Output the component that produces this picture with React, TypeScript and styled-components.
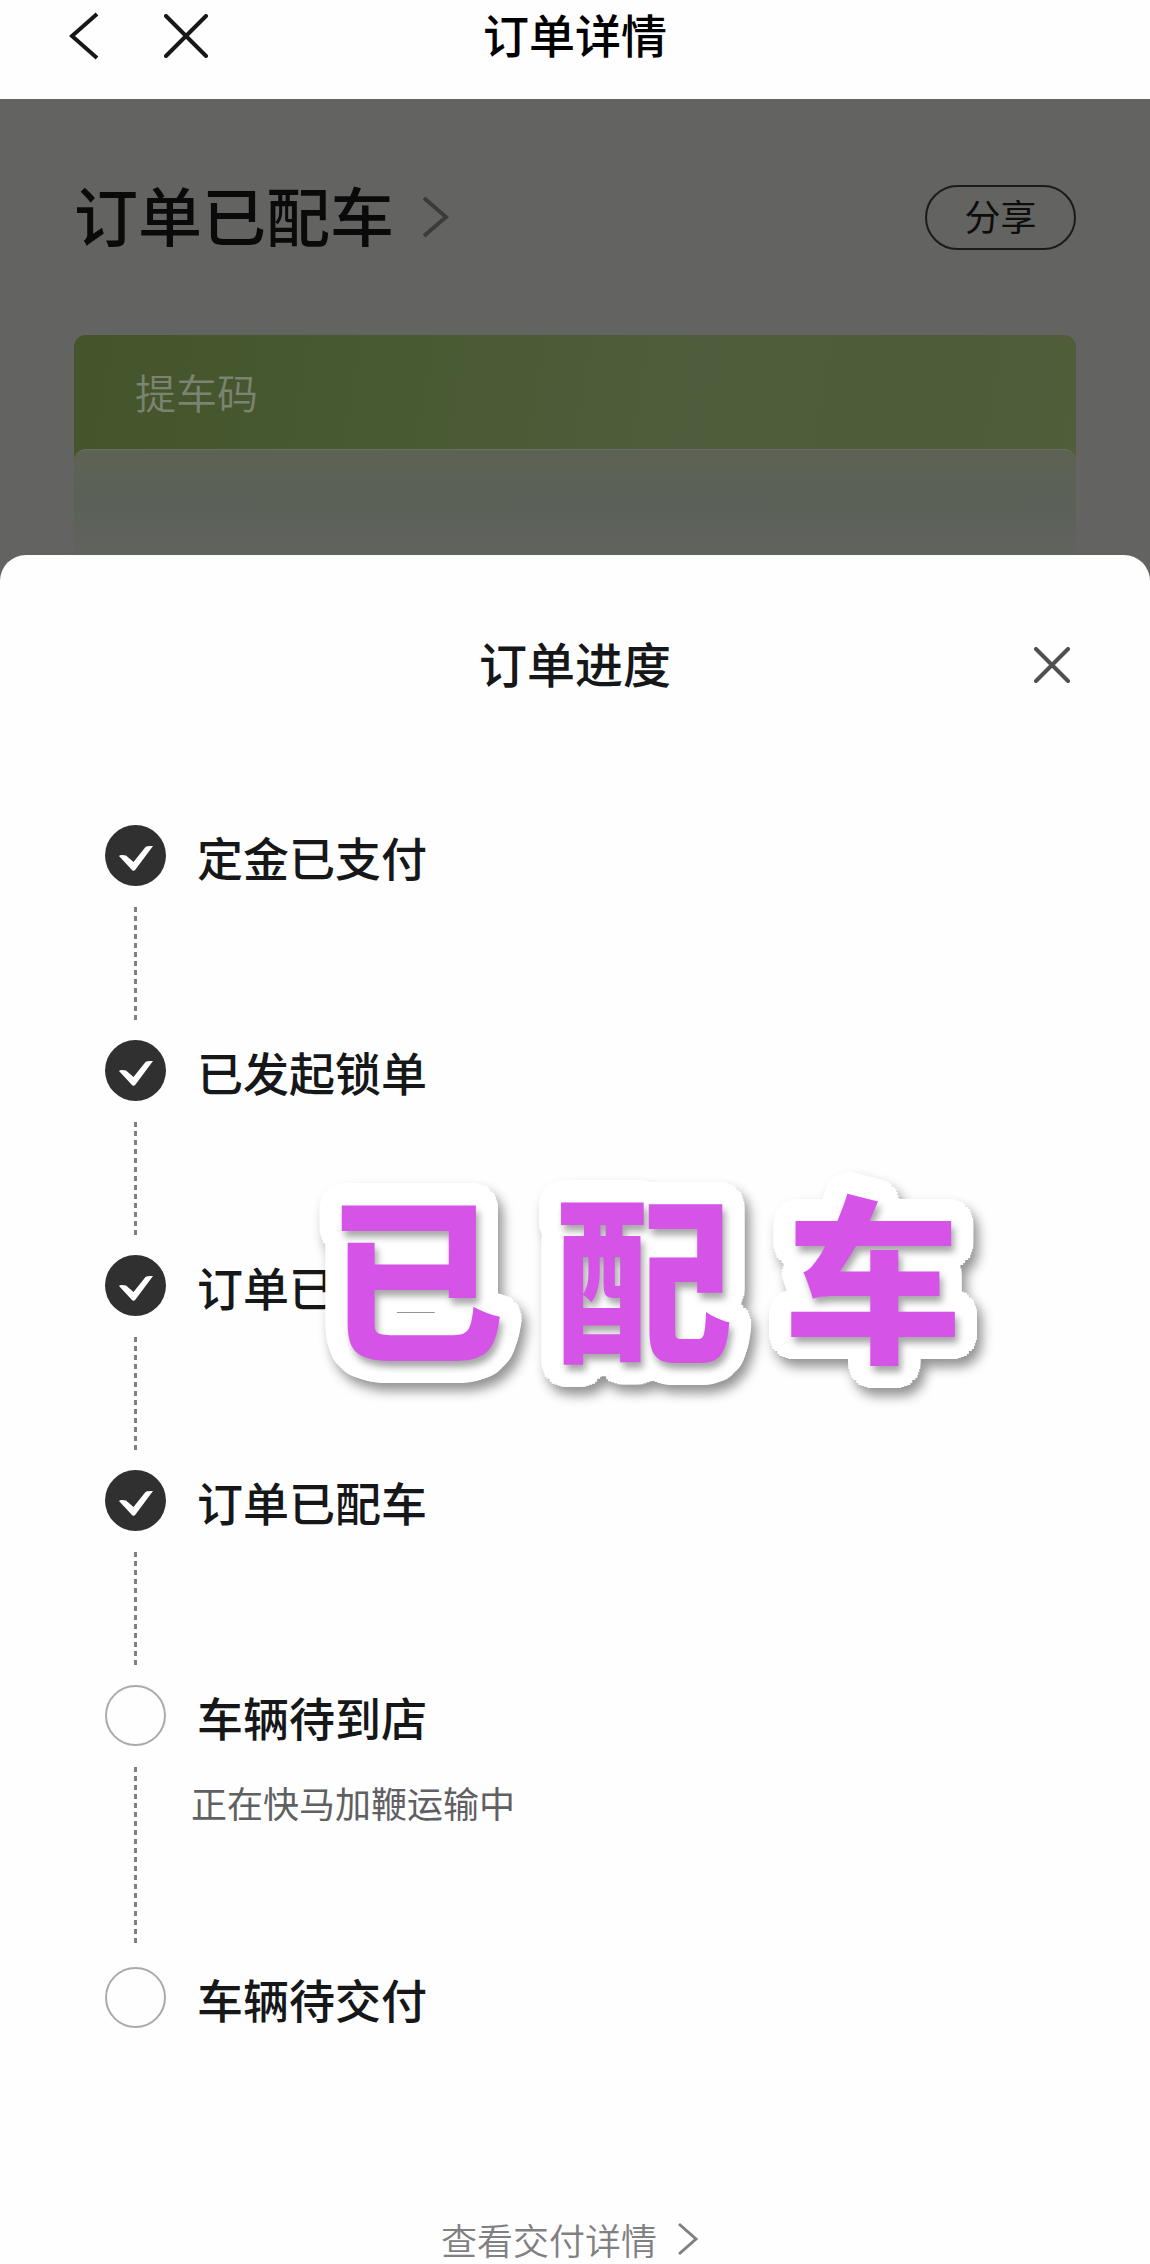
import React from "react";
import styled, { createGlobalStyle, css } from "styled-components";

const GlobalStyle = createGlobalStyle`
  *, *::before, *::after { box-sizing: border-box; }
  body {
    margin: 0;
    background: #fefefe;
    color: #161719;
    font-family: "Noto Sans CJK SC", sans-serif;
  }
  button { font-family: inherit; color: inherit; background: none; border: 0; padding: 0; cursor: pointer; }
  h1, h2, p, ol { margin: 0; padding: 0; }
  svg { display: block; }
`;

const Page = styled.div`
  display: flex;
  flex-direction: column;
  min-height: 100vh;
`;

const NavBar = styled.header`
  display: grid;
  grid-template-columns: 1fr auto 1fr;
  align-items: start;
  height: 99px;
  padding: 12px 60px 0;
  background: #fefefe;
`;

const NavActions = styled.div`
  display: flex;
  gap: 54px;
`;

const IconButton = styled.button`
  display: grid;
  place-items: center;
  width: 48px;
  height: 48px;
`;

const NavTitle = styled.h1`
  font-size: 46px;
  font-weight: 500;
  line-height: 42px;
  color: #000;
`;

const Backdrop = styled.main`
  height: 488px;
  padding: 82px 74px 0;
  background: #636361;
  overflow: hidden;
`;

const StatusRow = styled.div`
  display: flex;
  align-items: center;
  justify-content: space-between;
  height: 72px;
`;

const StatusButton = styled.button`
  display: flex;
  align-items: center;
  gap: 28px;
  color: #0a0a0a;
`;

const StatusText = styled.span`
  padding-bottom: 8px;
  font-size: 64px;
  font-weight: 500;
  line-height: 64px;
`;

const ShareButton = styled.button`
  width: 151px;
  height: 65px;
  padding-bottom: 4px;
  border: 2px solid #1b1b1b;
  border-radius: 33px;
  font-size: 36px;
  line-height: 54px;
  color: #0d0d0d;
`;

const PickupCard = styled.section`
  margin-top: 82px;
  border-radius: 12px 12px 0 0;
  background: linear-gradient(100deg, #44542b 0%, #485a32 30%, #4f5d3c 60%, #4e5c3a 85%, #505e3a 100%);
`;

const PickupLabel = styled.h2`
  height: 114px;
  padding: 0 61px;
  font-size: 41px;
  font-weight: 350;
  line-height: 112px;
  color: #7b8372;
`;

const PickupBody = styled.div`
  height: 140px;
  border-top: 1px solid #68705f;
  border-radius: 12px 12px 0 0;
  background: linear-gradient(#5d6254, #5b6157 40%, #636361 85%);
`;

const Sheet = styled.section`
  position: relative;
  flex: 1;
  display: flex;
  flex-direction: column;
  margin-top: -32px;
  padding: 80px 74px 0;
  border-radius: 26px 26px 0 0;
  background: #fefefe;
`;

const SheetHeader = styled.div`
  display: grid;
  grid-template-columns: 1fr auto 1fr;
  align-items: center;
  height: 60px;
`;

const SheetTitle = styled.h2`
  grid-column: 2;
  padding-bottom: 6px;
  font-size: 48px;
  font-weight: 500;
  line-height: 54px;
`;

const CloseButton = styled(IconButton)`
  justify-self: end;
`;

const Steps = styled.ol`
  margin-top: 130px;
  padding-left: 31px;
  list-style: none;
`;

const Step = styled.li<{ $tall?: boolean }>`
  display: flex;
  gap: 31px;
  min-height: ${(p) => (p.$tall ? 282 : 215)}px;
  &:last-child { min-height: 0; }
`;

const Track = styled.div`
  display: flex;
  flex-direction: column;
  align-items: center;
  width: 61px;
`;

const Marker = styled.span<{ $done: boolean }>`
  display: grid;
  place-items: center;
  flex: none;
  width: 61px;
  height: 61px;
  border-radius: 50%;
  ${(p) =>
    p.$done
      ? css`background: #303030;`
      : css`border: 2px solid #aaa;`}
`;

const Dashes = styled.span`
  flex: 1;
  width: 3px;
  margin: 21px 0 20px;
  background: repeating-linear-gradient(#808080 0 5px, transparent 5px 9px);
`;

const StepText = styled.div`
  padding-bottom: 4px;
`;

const StepLabel = styled.p`
  font-size: 46px;
  font-weight: 500;
  line-height: 62px;
`;

const StepNote = styled.p`
  margin: 31px 0 0 -6px;
  font-size: 36px;
  line-height: 48px;
  color: #5f6062;
`;

const DetailButton = styled.button`
  display: flex;
  align-items: center;
  align-self: center;
  gap: 20px;
  margin-top: 182px;
  padding-right: 10px;
  font-size: 36px;
  font-weight: 350;
  line-height: 48px;
  color: #808083;
`;

const outline = (radius: number, count: number) =>
  Array.from({ length: count }, (_, i) => {
    const a = (i / count) * Math.PI * 2;
    return `${Math.round(Math.cos(a) * radius)}px ${Math.round(Math.sin(a) * radius)}px 0 #fff`;
  }).join(", ");

const Sticker = styled.div`
  position: absolute;
  top: 585px;
  left: 326px;
  display: flex;
  gap: 51px;
  font-size: 178px;
  font-weight: 900;
  line-height: 264px;
  color: #d653e8;
  text-shadow: 3px 6px 7px rgba(0, 0, 0, 0.35), ${outline(22, 44)}, ${outline(12, 20)};
  filter: drop-shadow(5px 8px 6px rgba(0, 0, 0, 0.42));
  pointer-events: none;
`;

const Chevron = ({ width, height, stroke, left }: { width: number; height: number; stroke: number; left?: boolean }) => (
  <svg width={width} height={height} viewBox={`0 0 ${width} ${height}`} fill="none" stroke="currentColor" strokeWidth={stroke} aria-hidden="true">
    <path
      d={
        left
          ? `M${width - 2} 2L3 ${height / 2}L${width - 2} ${height - 2}`
          : `M2 2L${width - 3} ${height / 2}L2 ${height - 2}`
      }
    />
  </svg>
);

const Cross = ({ size, stroke }: { size: number; stroke: number }) => (
  <svg width={size} height={size} viewBox={`0 0 ${size} ${size}`} fill="none" stroke="currentColor" strokeWidth={stroke} strokeLinecap="round" aria-hidden="true">
    <path d={`M2 2L${size - 2} ${size - 2}M${size - 2} 2L2 ${size - 2}`} />
  </svg>
);

const Check = () => (
  <svg width="61" height="61" viewBox="0 0 61 61" fill="#fff" aria-hidden="true">
    <path d="M14 31Q15 29.5 21 30.500L28.500 37L40.500 22Q42 20.500 48 21L30.500 44.500Q28.500 47 26.500 44.500Z" />
  </svg>
);

const Muted = styled.span`
  color: #3b3b3b;
`;

const CloseTone = styled.span`
  color: #505050;
`;

const steps = [
  { label: "定金已支付", done: true },
  { label: "已发起锁单", done: true },
  { label: "订单已", done: true },
  { label: "订单已配车", done: true },
  { label: "车辆待到店", done: false, note: "正在快马加鞭运输中" },
  { label: "车辆待交付", done: false },
];

export default function App() {
  return (
    <Page>
      <GlobalStyle />
      <NavBar>
        <NavActions>
          <IconButton type="button" aria-label="返回">
            <Chevron width={30} height={48} stroke={4} left />
          </IconButton>
          <IconButton type="button" aria-label="关闭">
            <Cross size={44} stroke={4} />
          </IconButton>
        </NavActions>
        <NavTitle>订单详情</NavTitle>
      </NavBar>
      <Backdrop>
        <StatusRow>
          <StatusButton type="button">
            <StatusText>订单已配车</StatusText>
            <Muted>
              <Chevron width={27} height={42} stroke={4} />
            </Muted>
          </StatusButton>
          <ShareButton type="button">分享</ShareButton>
        </StatusRow>
        <PickupCard>
          <PickupLabel>提车码</PickupLabel>
          <PickupBody />
        </PickupCard>
      </Backdrop>
      <Sheet aria-label="订单进度">
        <SheetHeader>
          <SheetTitle>订单进度</SheetTitle>
          <CloseButton type="button" aria-label="关闭进度">
            <CloseTone>
              <Cross size={36} stroke={4} />
            </CloseTone>
          </CloseButton>
        </SheetHeader>
        <Steps>
          {steps.map((step, i) => (
            <Step key={step.label} $tall={Boolean(step.note)}>
              <Track>
                <Marker $done={step.done}>{step.done && <Check />}</Marker>
                {i < steps.length - 1 && <Dashes />}
              </Track>
              <StepText>
                <StepLabel>{step.label}</StepLabel>
                {step.note && <StepNote>{step.note}</StepNote>}
              </StepText>
            </Step>
          ))}
        </Steps>
        <DetailButton type="button">
          查看交付详情
          <Chevron width={22} height={34} stroke={3} />
        </DetailButton>
        <Sticker>
          <span>已</span>
          <span>配</span>
          <span>车</span>
        </Sticker>
      </Sheet>
    </Page>
  );
}
